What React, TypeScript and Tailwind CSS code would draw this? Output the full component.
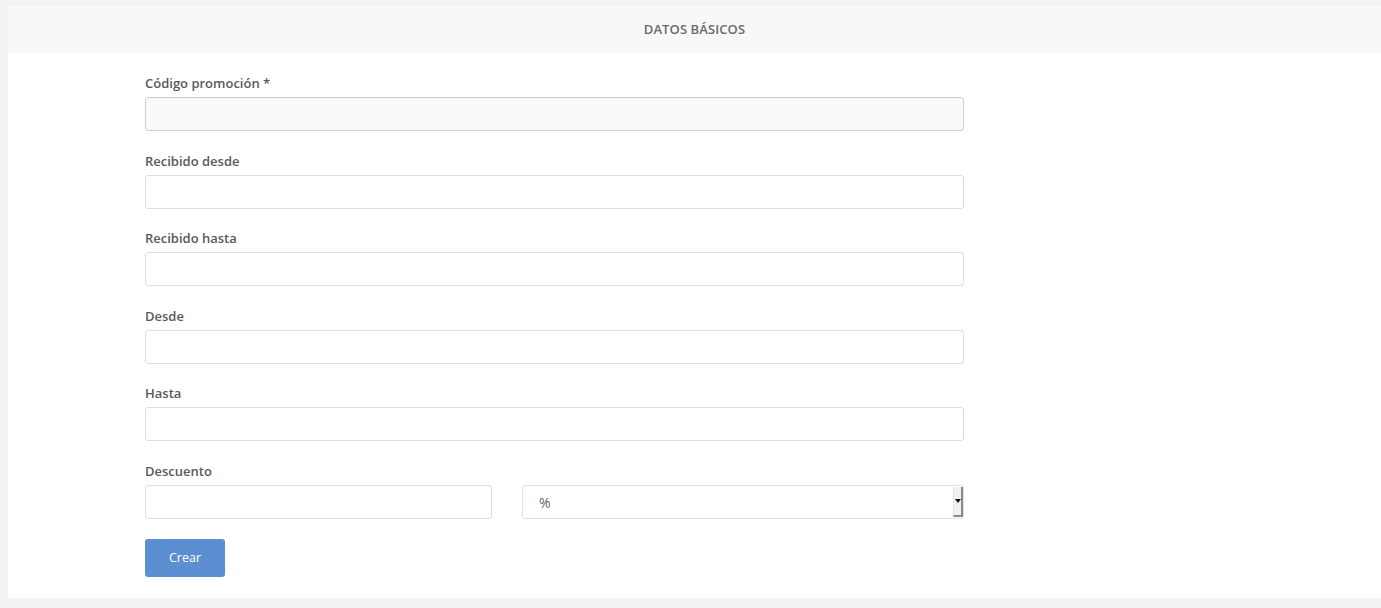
import React from "react";

const font = { fontFamily: '"Open Sans", "Liberation Sans", sans-serif' };

function Field({ label, first }: { label: string; first?: boolean }) {
  return (
    <div className="mb-[20.6px]">
      <div className="h-[18px] mb-[5px] text-[13px] leading-[18px] font-semibold text-[#595959]">{label}</div>
      <div
        className={
          first
            ? "h-[34px] w-full rounded-[3px] border border-[#cfcfcf] bg-[#fafafa]"
            : "h-[34px] w-full rounded-[3px] border border-[#dedede] bg-white"
        }
      />
    </div>
  );
}

export default function App() {
  return (
    <div className="min-h-[608px] bg-[#f3f3f3] pt-[6px] pl-[8px] pb-[10px]" style={font}>
      <div className="bg-white">
        <div className="h-[47px] bg-[#f8f8f8] flex items-center justify-center">
          <span className="text-[13px] font-semibold text-[#6b6b6b] tracking-[0.1px] pt-[1px]">DATOS BÁSICOS</span>
        </div>
        <div className="pt-[21px] pb-[21px] pl-[137px]">
          <div className="w-[819px]">
            <Field label="Código promoción *" first />
            <Field label="Recibido desde" />
            <Field label="Recibido hasta" />
            <Field label="Desde" />
            <Field label="Hasta" />
            <div className="mb-[20px]">
              <div className="h-[18px] mb-[5px] text-[13px] leading-[18px] font-semibold text-[#595959]">Descuento</div>
              <div className="flex gap-[30px]">
                <div className="h-[34px] w-[347px] rounded-[3px] border border-[#dedede] bg-white" />
                <div className="relative h-[34px] w-[442px] rounded-[3px] border border-[#e0e0e0] bg-white flex items-center pl-[16px]">
                  <span className="text-[14px] text-[#666] pt-[1px]">%</span>
                  <div className="absolute right-0 top-[1px] bottom-[1px] w-[10px] bg-[#f1f1f1] border-l border-[#e3e3e3] border-r-[2px] border-r-[#8a8a8a] border-b-[2px] border-b-[#8a8a8a] flex items-center justify-center">
                    <svg width="6" height="4" viewBox="0 0 6 4">
                      <path d="M0 0 H6 L3 4 Z" fill="#111" />
                    </svg>
                  </div>
                </div>
              </div>
            </div>
            <button className="h-[38px] w-[80px] rounded-[3px] bg-[#5b8fd2] text-white text-[12.5px] pt-[1px]">Crear</button>
          </div>
        </div>
      </div>
    </div>
  );
}
